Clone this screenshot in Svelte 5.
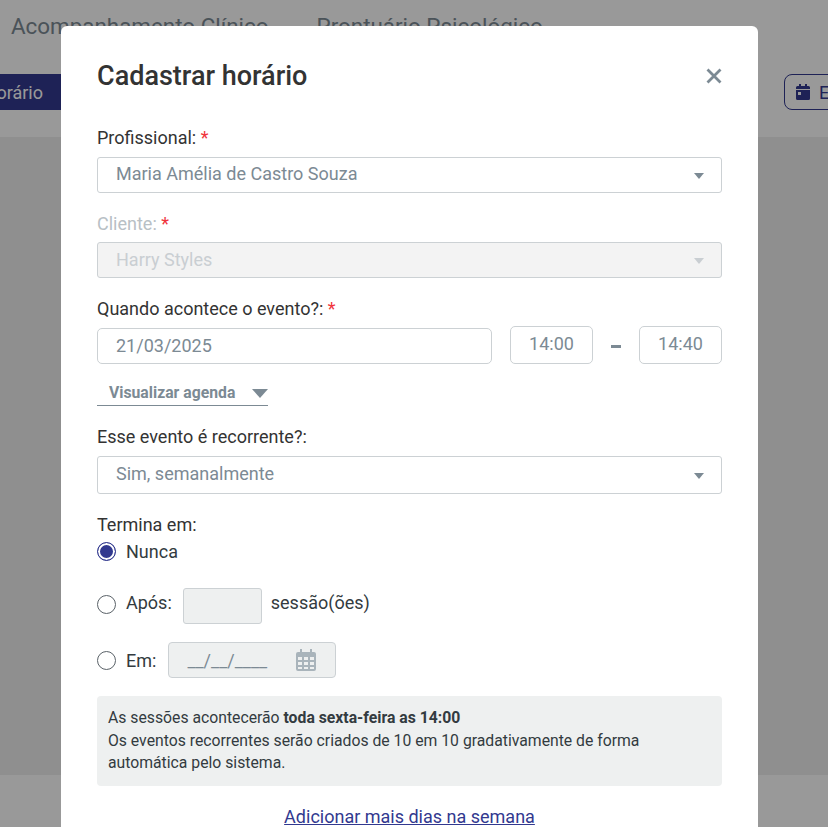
<script lang="ts">
	const tabs = ["Acompanhamento Clínico", "Prontuário Psicológico"];
</script>

<div class="page">
	<nav class="tabs">
		{#each tabs as tab}
			<span>{tab}</span>
		{/each}
	</nav>
	<div class="actions">
		<button class="primary">Cadastrar horário</button>
		<button class="outline">
			<svg width="14" height="16" viewBox="0 0 14 16"><path fill="currentColor" d="M3 0h2v2h4V0h2v2h1.500A1.500 1.500 0 0 1 14 3.500V5H0V3.500A1.500 1.500 0 0 1 1.500 2H3zM0 6h14v8.500a1.500 1.500 0 0 1-1.500 1.500h-11A1.500 1.500 0 0 1 0 14.500zm2 2v3h3V8z" fill-rule="evenodd"/></svg>
			Exportar
		</button>
	</div>
	<div class="content"></div>
	<div class="footer"></div>
</div>

<div class="backdrop">
	<div class="modal">
		<header>
			<h2>Cadastrar horário</h2>
			<svg class="close" width="16" height="16" viewBox="0 0 16 16"><path d="M1.500 1.500l13 13M14.500 1.500l-13 13" stroke="#7c8a94" stroke-width="2.800"/></svg>
		</header>

		<div class="field person">
			<label>Profissional: <em>*</em></label>
			<div class="select">Maria Amélia de Castro Souza<i class="caret"></i></div>
		</div>

		<div class="field person disabled">
			<label>Cliente: <em>*</em></label>
			<div class="select">Harry Styles<i class="caret"></i></div>
		</div>

		<div class="field when">
			<label>Quando acontece o evento?: <em>*</em></label>
			<div class="when-row">
				<div class="select date">21/03/2025</div>
				<div class="time">14:00</div>
				<span class="dash"></span>
				<div class="time">14:40</div>
			</div>
		</div>

		<div class="agenda">Visualizar agenda<i class="caret big"></i></div>

		<div class="field recurring">
			<label>Esse evento é recorrente?:</label>
			<div class="select">Sim, semanalmente<i class="caret"></i></div>
		</div>

		<div class="ends">
			<label>Termina em:</label>
			<div class="radio-row first"><span class="radio on"></span>Nunca</div>
			<div class="radio-row after">
				<span class="radio"></span>Após:
				<span class="count"></span>
				sessão(ões)
			</div>
			<div class="radio-row until">
				<span class="radio"></span>Em:
				<span class="date-off">
					<span class="mask">__/__/____</span>
					<svg width="20" height="22" viewBox="0 0 20 22"><path fill="#a9b4bb" fill-rule="evenodd" d="M4 0h2v3h8V0h2v3h2a2 2 0 0 1 2 2v15a2 2 0 0 1-2 2H2a2 2 0 0 1-2-2V5a2 2 0 0 1 2-2h2zM2 8v3h4V8zm6 0v3h4V8zm6 0v3h4V8zM2 13v3h4v-3zm6 0v3h4v-3zm6 0v3h4v-3zM2 18v2h4v-2zm6 0v2h4v-2zm6 0v2h4v-2z"/></svg>
				</span>
			</div>
		</div>

		<div class="info">
			As sessões acontecerão <b>toda sexta-feira as 14:00</b><br />
			Os eventos recorrentes serão criados de 10 em 10 gradativamente de forma automática pelo sistema.
		</div>

		<a class="more" href="#more">Adicionar mais dias na semana</a>
	</div>
</div>

<style>
	:global(body) {
		margin: 0;
		font-family: Roboto, "Liberation Sans", sans-serif;
		overflow: hidden;
		height: 827px;
	}

	.page {
		height: 827px;
		display: flex;
		flex-direction: column;
		background: #fff;
		overflow: hidden;
	}

	.tabs {
		display: flex;
		gap: 48px;
		padding: 13px 0 0 11px;
		height: 60px;
		box-sizing: border-box;
		font-size: 22.400px;
		color: #7c8a94;
	}

	.actions {
		display: flex;
		justify-content: space-between;
		height: 77px;
		box-sizing: border-box;
		padding-top: 14px;
	}

	.actions button {
		height: 36px;
		font: 18px Roboto, sans-serif;
		flex: none;
		white-space: nowrap;
	}

	.primary {
		background: #32398f;
		color: #fff;
		border: none;
		width: 200px;
		margin-left: -139px;
		text-align: right;
		padding: 0 18px 0 0;
	}

	.outline {
		width: 120px;
		margin-right: -76px;
		background: #fff;
		color: #32398f;
		border: 1px solid #32398f;
		border-radius: 8px;
		text-align: left;
		padding: 0 0 0 11px;
		display: flex;
		align-items: center;
		gap: 9px;
	}

	.content {
		flex: 1;
		background: #efefef;
	}

	.footer {
		height: 52px;
		background: #fff;
	}

	.backdrop {
		position: absolute;
		inset: 0;
		height: 827px;
		background: rgba(0, 0, 0, 0.4);
		overflow: hidden;
	}

	.modal {
		width: 697px;
		height: 860px;
		box-sizing: border-box;
		margin: 26px 0 0 61px;
		padding: 0 36px;
		background: #fff;
		border-radius: 6px;
		color: #333b40;
		font-size: 18px;
	}

	header {
		height: 99px;
		display: flex;
		align-items: center;
		justify-content: space-between;
		box-sizing: border-box;
	}

	h2 {
		margin: 0;
		font-size: 27px;
		font-weight: 500;
		color: #333;
	}

	label {
		display: block;
		line-height: 24px;
		color: #333;
	}

	em {
		color: #f0343c;
		font-style: normal;
	}

	.field {
		margin-bottom: 18px;
	}

	.field label {
		margin-bottom: 8px;
	}

	.person label {
		padding-top: 1px;
		margin-bottom: 7px;
	}

	.select {
		position: relative;
		height: 36px;
		box-sizing: border-box;
		border: 1px solid #ccd1d4;
		border-radius: 3px;
		padding-left: 18px;
		line-height: 32px;
		color: #7c8a94;
	}

	.caret {
		position: absolute;
		right: 17px;
		top: 15px;
		border: 5px solid transparent;
		border-top: 6px solid #7c8a94;
		border-bottom: 0;
	}

	.disabled {
		margin-bottom: 19px;
	}

	.disabled label {
		margin-bottom: 6px;
		color: #b8c0c5;
	}

	.disabled .select {
		background: #f3f3f3;
		color: #c9ced2;
		line-height: 34px;
	}

	.disabled .caret {
		border-top-color: #c9ced2;
	}

	.when {
		margin-bottom: 0;
	}

	.when label {
		margin-bottom: 5px;
	}

	.when-row {
		display: flex;
		align-items: flex-end;
	}

	.date {
		width: 395px;
		border-radius: 5px;
		line-height: 34px;
	}

	.time {
		width: 83px;
		height: 38px;
		box-sizing: border-box;
		margin-left: 18px;
		border: 1px solid #ccd1d4;
		border-radius: 5px;
		text-align: center;
		line-height: 33px;
		color: #7c8a94;
	}

	.dash {
		width: 10px;
		height: 3px;
		margin: 0 0 16px 18px;
		background: #7c8a94;
	}

	.agenda {
		position: relative;
		width: 171px;
		height: 29px;
		box-sizing: border-box;
		margin: 13px 0 19px;
		padding: 6px 0 0 12px;
		border-bottom: 1px solid #7c8a94;
		font-size: 15.750px;
		font-weight: 700;
		color: #7c8a94;
	}

	.caret.big {
		right: 0;
		top: 12px;
		border-width: 8px;
		border-top-width: 9px;
		border-bottom: 0;
	}

	.recurring {
		margin-bottom: 19px;
	}

	.recurring label {
		margin-bottom: 7px;
	}

	.recurring .select {
		height: 38px;
		line-height: 34px;
	}

	.recurring .caret {
		top: 16px;
	}

	.radio-row {
		display: flex;
		align-items: center;
		color: #333b40;
	}

	.radio {
		width: 19px;
		height: 19px;
		box-sizing: border-box;
		margin-right: 10px;
		border: 1px solid #5a6268;
		border-radius: 50%;
		background: #fff;
	}

	.radio.on {
		border: 1px solid #32398f;
		background: #32398f;
		box-shadow: inset 0 0 0 2px #fff;
	}

	.first {
		height: 29px;
	}

	.after {
		align-items: flex-start;
		height: 36px;
		margin-top: 22px;
		line-height: 30px;
	}

	.after .radio {
		margin-top: 7px;
	}

	.count {
		width: 79px;
		height: 36px;
		box-sizing: border-box;
		margin: 0 9px 0 11px;
		border: 1px solid #ccd1d4;
		border-radius: 3px;
		background: #eef0f0;
	}

	.until {
		height: 36px;
		margin-top: 18px;
		line-height: 35px;
	}

	.date-off {
		width: 168px;
		height: 36px;
		box-sizing: border-box;
		display: flex;
		align-items: center;
		justify-content: space-between;
		margin-left: 12px;
		padding: 0 19px 0 18px;
		border: 1px solid #ccd1d4;
		border-radius: 4px;
		background: #eef0f0;
	}

	.mask {
		color: #7c8a94;
	}

	.info {
		margin-top: 18px;
		height: 90px;
		box-sizing: border-box;
		padding: 11px;
		background: #eef0f0;
		border-radius: 4px;
		font-size: 15.750px;
		line-height: 22.500px;
		color: #333b40;
	}

	.more {
		display: block;
		margin-top: 20px;
		text-align: center;
		color: #32398f;
	}
</style>
